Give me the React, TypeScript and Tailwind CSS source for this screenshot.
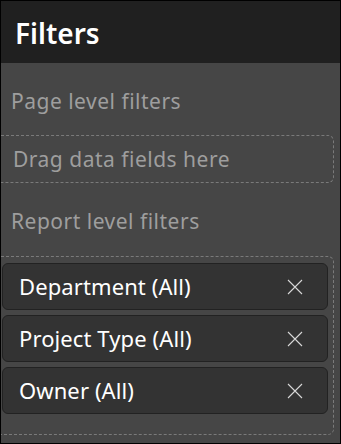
import React from "react";

const font = { fontFamily: '"Noto Sans", "Open Sans", sans-serif' };

function XIcon() {
  return (
    <svg width="16" height="16" viewBox="0 0 16 16" className="shrink-0">
      <path d="M1 1 L15 15 M15 1 L1 15" stroke="#d8d8d8" strokeWidth="1.1" fill="none" />
    </svg>
  );
}

function Card({ label }: { label: string }) {
  return (
    <div className="h-[47px] ml-[1px] mr-[5px] flex items-center justify-between rounded-[6px] border border-[#222222] bg-[#333333] pl-[16px] pr-[24px]">
      <span className="text-[22px] text-white leading-none tracking-[0.1px] pb-[2px]">{label}</span>
      <XIcon />
    </div>
  );
}

export default function App() {
  return (
    <div className="w-[341px] h-[444px] border border-black bg-[#464646] flex flex-col overflow-hidden" style={font}>
      <div className="h-[62px] bg-[#202020] flex items-center pl-[14px] shrink-0">
        <span className="text-[28px] font-semibold text-white leading-none pt-[2px]">Filters</span>
      </div>
      <div className="flex flex-col pt-[24px]">
        <div className="h-[28px] leading-[28px] text-[21px] tracking-[0.5px] text-[#9e9e9e] pl-[10px]">Page level filters</div>
        <div className="mt-[20px] mr-[6px] h-[48px] border border-l-0 border-dashed border-[#7a7a7a] rounded-r-[6px] flex items-center pl-[12px]">
          <span className="text-[21px] tracking-[0.5px] text-[#9e9e9e] leading-none">Drag data fields here</span>
        </div>
        <div className="mt-[24px] h-[28px] leading-[28px] text-[21px] tracking-[0.5px] text-[#9e9e9e] pl-[10px]">Report level filters</div>
        <div className="mt-[21px] mr-[6px] h-[179px] border border-l-0 border-dashed border-[#7a7a7a] rounded-r-[6px] flex flex-col gap-[5px] pt-[6px]">
          <Card label="Department (All)" />
          <Card label="Project Type (All)" />
          <Card label="Owner (All)" />
        </div>
      </div>
    </div>
  );
}
